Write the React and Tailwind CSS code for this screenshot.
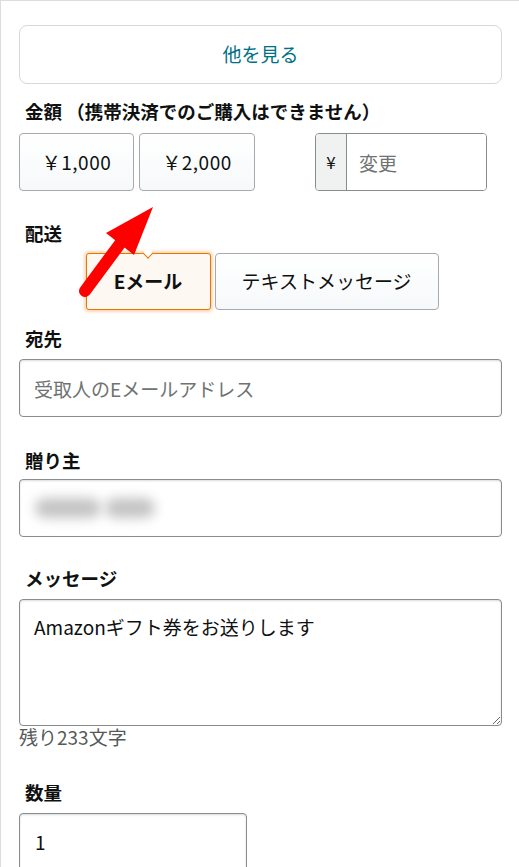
import React from 'react';

const font = { fontFamily: '"Noto Sans CJK JP", "Noto Sans", sans-serif' };

function Label({ children, className = '' }) {
  return (
    <div className={`pl-[6px] text-[18.5px] leading-[22px] font-bold text-[#0f1111] ${className}`}>
      {children}
    </div>
  );
}

function TextInput({ placeholder, className = '', children }) {
  return (
    <div className={`relative h-[58px] rounded-[4px] border border-[#888c8c] bg-white shadow-[inset_0_1px_2px_rgba(15,17,17,0.15)] ${className}`}>
      {placeholder && (
        <input
          placeholder={placeholder}
          className="h-full w-full rounded-[4px] bg-transparent px-[14px] text-[19px] text-[#0f1111] outline-none placeholder:text-[#6f7373]"
          style={font}
        />
      )}
      {children}
    </div>
  );
}

export default function App() {
  return (
    <div className="relative min-h-screen border-l border-t border-[#dddddd] bg-white pl-[18px] pr-[17px] pt-[24px]" style={font}>
      <button className="h-[59px] w-full rounded-[8px] border border-[#d5d9d9] bg-white text-[19px] text-[#007185]">
        他を見る
      </button>

      <Label className="mt-[16px]">金額 （携帯決済でのご購入はできません）</Label>
      <div className="mt-[11px] flex items-start">
        <button className="h-[58px] w-[115px] rounded-[4px] border border-[#a6aaaf] bg-gradient-to-b from-white to-[#f6f9fa] text-[19px] tracking-[0.5px] text-[#0f1111]">
          ￥1,000
        </button>
        <button className="ml-[5px] h-[58px] w-[116px] rounded-[4px] border border-[#a6aaaf] bg-gradient-to-b from-white to-[#f6f9fa] text-[19px] tracking-[0.5px] text-[#0f1111]">
          ￥2,000
        </button>
        <div className="ml-[60px] flex h-[58px] w-[172px] overflow-hidden rounded-[4px] border border-[#888c8c]">
          <div className="flex w-[31px] items-center justify-center border-r border-[#888c8c] bg-[#f0f2f2] text-[17px] text-[#0f1111]">
            ¥
          </div>
          <input
            placeholder="変更"
            className="h-full min-w-0 flex-1 bg-white px-[12px] text-[19px] outline-none placeholder:text-[#6f7373]"
            style={font}
          />
        </div>
      </div>

      <Label className="mt-[31px]">配送</Label>
      <div className="mt-[9px] flex justify-center gap-[4px] pl-[3px]">
        <button className="relative h-[57px] w-[125px] rounded-[3px] border border-[#e77600] bg-[#fef8f2] text-[19px] font-bold text-[#0f1111] shadow-[0_0_3px_2px_rgba(228,121,17,0.3)]">
          <span className="absolute left-1/2 top-[-5px] h-[8px] w-[8px] -translate-x-1/2 rotate-45 border-b border-r border-[#e77600] bg-white" />
          Eメール
        </button>
        <button className="h-[57px] w-[224px] rounded-[4px] border border-[#a6aaaf] bg-gradient-to-b from-white to-[#f6f9fa] text-[19px] text-[#0f1111]">
          テキストメッセージ
        </button>
      </div>

      <Label className="mt-[17px]">宛先</Label>
      <TextInput className="mt-[10px]" placeholder="受取人のEメールアドレス" />

      <Label className="mt-[32px]">贈り主</Label>
      <TextInput className="mt-[8px]">
        <div className="flex h-full items-center gap-[4px] pl-[15px]">
          <div className="h-[20px] w-[66px] rounded-full bg-[#c4c4c4] blur-[6px]" />
          <div className="h-[20px] w-[50px] rounded-full bg-[#c4c4c4] blur-[6px]" />
        </div>
      </TextInput>

      <Label className="mt-[30px]">メッセージ</Label>
      <textarea
        readOnly
        value="Amazonギフト券をお送りします"
        className="mt-[10px] block h-[127px] w-full rounded-[4px] border border-[#888c8c] bg-white px-[14px] py-[14px] text-[19px] leading-[26px] text-[#0f1111] shadow-[inset_0_1px_2px_rgba(15,17,17,0.15)] outline-none"
        style={font}
      />
      <div className="text-[19px] leading-[22px] text-[#565959]">残り233文字</div>

      <Label className="mt-[33px]">数量</Label>
      <TextInput className="mt-[10px] w-[228px]">
        <div className="pl-[15px] pt-[14px] text-[19px] text-[#0f1111]">1</div>
      </TextInput>

      <svg className="pointer-events-none absolute left-0 top-0" width="519" height="867" viewBox="0 0 519 867">
        <line x1="84" y1="290" x2="121" y2="240" stroke="#ff0000" strokeWidth="12" strokeLinecap="round" />
        <polygon points="152,206 105,232 133,254" fill="#ff0000" />
      </svg>
    </div>
  );
}
